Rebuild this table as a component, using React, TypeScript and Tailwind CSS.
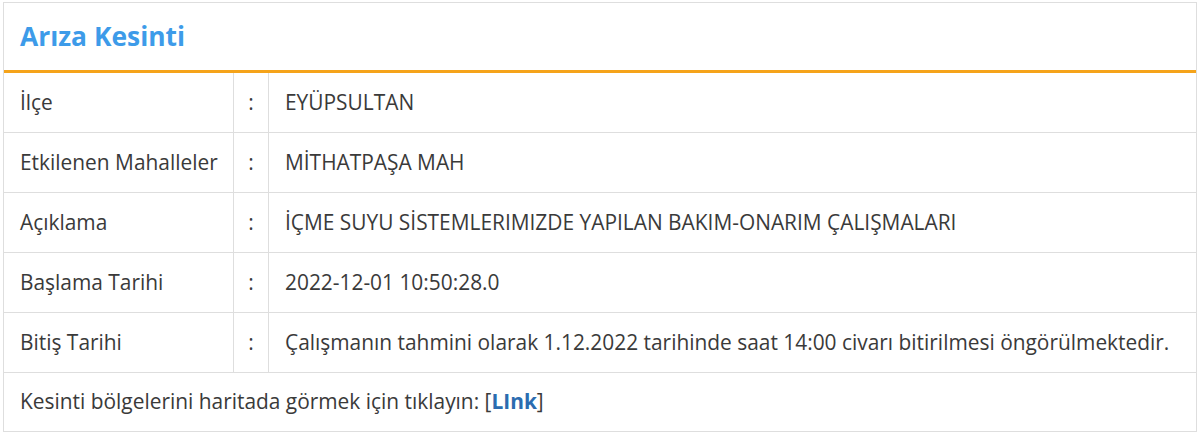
export default function App() {
  const rows: [string, string][] = [
    ["İlçe", "EYÜPSULTAN"],
    ["Etkilenen Mahalleler", "MİTHATPAŞA MAH"],
    ["Açıklama", "İÇME SUYU SİSTEMLERIMIZDE YAPILAN BAKIM-ONARIM ÇALIŞMALARI"],
    ["Başlama Tarihi", "2022-12-01 10:50:28.0"],
    [
      "Bitiş Tarihi",
      "Çalışmanın tahmini olarak 1.12.2022 tarihinde saat 14:00 civarı bitirilmesi öngörülmektedir.",
    ],
  ];
  return (
    <div
      className="bg-white w-[1200px] h-[441px] pt-[2px] pl-[3px]"
      style={{ fontFamily: '"Open Sans", sans-serif' }}
    >
      <div className="w-[1194px] border border-[#dedede] text-[#3a3a3a] text-[20.9px]">
        <div className="h-[70px] flex items-center pl-[16px] border-b-[3px] border-[#f5a31a]">
          <span className="text-[#3d9be9] text-[26.4px] font-bold">Arıza Kesinti</span>
        </div>
        {rows.map(([k, v], i) => (
          <div key={i} className="flex h-[60px] border-b border-[#dedede]">
            <div className="w-[230px] shrink-0 flex items-center pl-[16px] border-r border-[#dedede]">
              {k}
            </div>
            <div className="w-[35px] shrink-0 flex items-center justify-center border-r border-[#dedede]">
              :
            </div>
            <div className="flex-1 flex items-center pl-[16px] whitespace-nowrap">{v}</div>
          </div>
        ))}
        <div className="h-[58px] flex items-center pl-[16px]">
          <span>
            Kesinti bölgelerini haritada görmek için tıklayın: [
            <a className="text-[#2b6cb0] font-bold">LInk</a>]
          </span>
        </div>
      </div>
    </div>
  );
}
